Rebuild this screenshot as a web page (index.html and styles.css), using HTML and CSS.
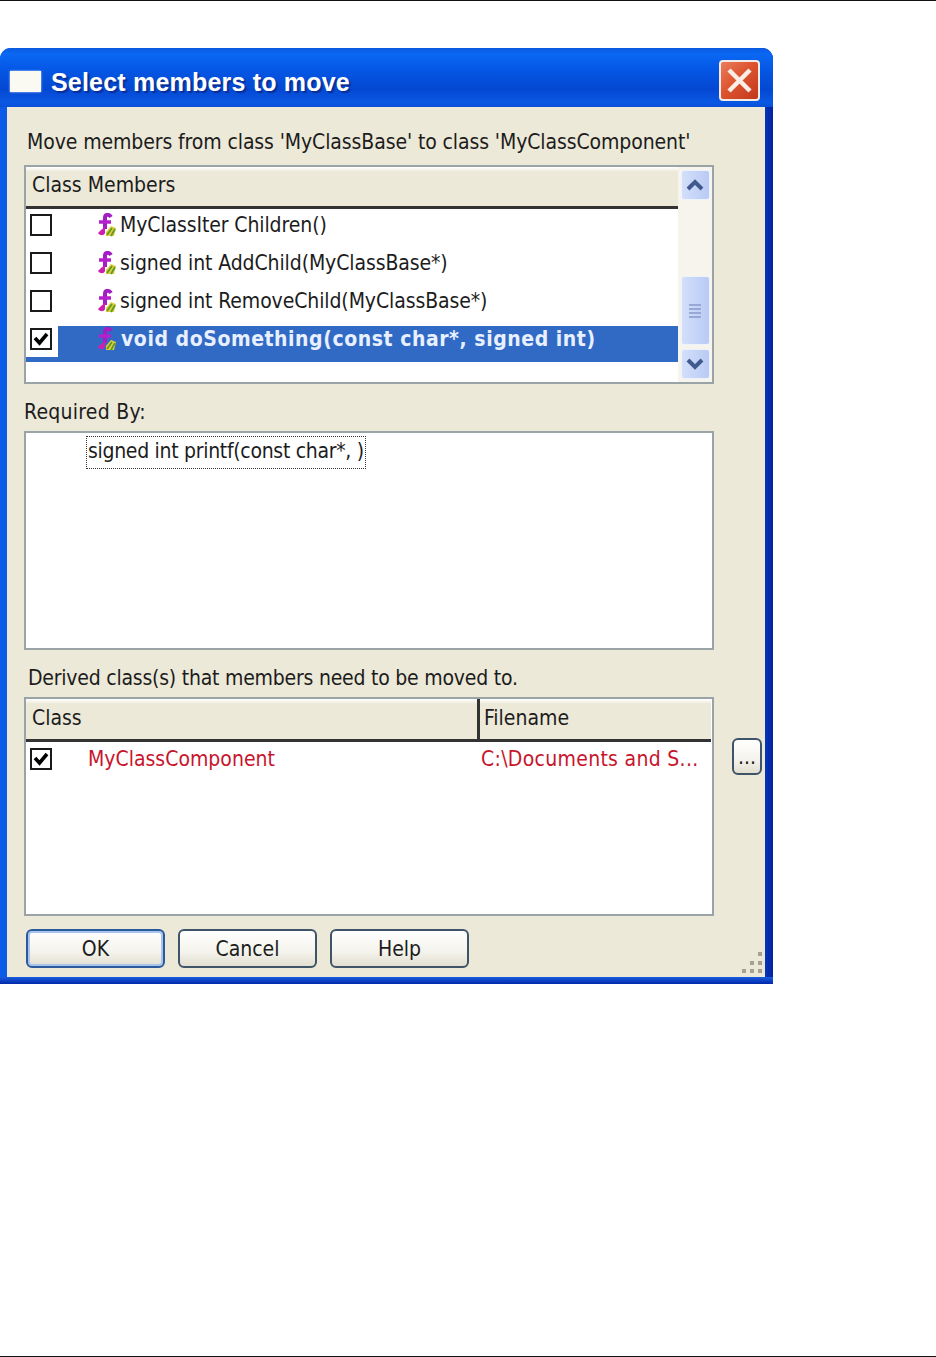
FILE: index.html
```html
<!DOCTYPE html>
<html lang="en">
<head>
  <meta charset="UTF-8" />
  <title>Select members to move</title>
  <link rel="stylesheet" href="styles.css">
</head>
<body>
<div class="page">
  <div class="window">
    <div class="titlebar">
      <span class="title-icon"></span>
      <span class="title-text">Select members to move</span>
      <button class="close-btn" aria-label="Close">
        <svg width="27" height="27" viewBox="0 0 27 27"><path d="M3 3 L24 24 M24 3 L3 24" stroke="#fbeee8" stroke-width="4.5" fill="none"/></svg>
      </button>
    </div>

    <div class="client">
      <div class="label label-move">Move members from class 'MyClassBase' to class 'MyClassComponent'</div>
      <div class="box box-list">
        <div class="list-main">
          <div class="head">Class Members</div>
          <div class="row">
            <span class="cell-check"><span class="check"></span></span>
            <svg class="fn-icon" viewBox="0 0 20 24"><use href="#fn"/></svg>
            <span>MyClassIter Children()</span>
          </div>
          <div class="row">
            <span class="cell-check"><span class="check"></span></span>
            <svg class="fn-icon" viewBox="0 0 20 24"><use href="#fn"/></svg>
            <span>signed int AddChild(MyClassBase*)</span>
          </div>
          <div class="row">
            <span class="cell-check"><span class="check"></span></span>
            <svg class="fn-icon" viewBox="0 0 20 24"><use href="#fn"/></svg>
            <span>signed int RemoveChild(MyClassBase*)</span>
          </div>
          <div class="row row-selected">
            <span class="cell-check"><span class="check"><svg viewBox="0 0 18 18"><use href="#tick"/></svg></span></span>
            <svg class="fn-icon" viewBox="0 0 20 24"><use href="#fn"/></svg>
            <span>void doSomething(const char*, signed int)</span>
          </div>
        </div>
        <div class="scrollbar">
          <span class="sb-btn">
            <svg width="18" height="12" viewBox="0 0 18 12"><path d="M2 10 L9 3 L16 10" stroke="#3f5a8c" stroke-width="4" fill="none"/></svg>
          </span>
          <span class="sb-thumb"><i></i><i></i><i></i><i></i></span>
          <span class="sb-btn">
            <svg width="18" height="12" viewBox="0 0 18 12"><path d="M2 2 L9 9 L16 2" stroke="#3f5a8c" stroke-width="4" fill="none"/></svg>
          </span>
        </div>
      </div>

      <div class="label label-gap label-required">Required By:</div>
      <div class="box box-req">
        <span class="focus-item">signed int printf(const char*, )</span>
      </div>

      <div class="label label-gap label-derived">Derived class(s) that members need to be moved to.</div>
      <div class="derived-row">
        <div class="box box-derived">
          <div class="head head-derived">
            <span class="col-class">Class</span>
            <span class="col-file">Filename</span>
          </div>
          <div class="row row-derived">
            <span class="cell-check"><span class="check"><svg viewBox="0 0 18 18"><use href="#tick"/></svg></span></span>
            <span class="col-name">MyClassComponent</span>
            <span class="col-path">C:\Documents and S...</span>
          </div>
        </div>
        <button class="btn btn-more">...</button>
      </div>

      <div class="buttons">
        <button class="btn btn-main btn-default">OK</button>
        <button class="btn btn-main">Cancel</button>
        <button class="btn btn-main">Help</button>
      </div>

      <svg class="grip" width="20" height="24" viewBox="0 0 20 24">
        <g fill="#a5a294">
          <rect x="16" y="2" width="4" height="4"/>
          <rect x="8" y="11" width="4" height="4"/>
          <rect x="16" y="11" width="4" height="4"/>
          <rect x="0" y="19" width="4" height="4"/>
          <rect x="8" y="19" width="4" height="4"/>
          <rect x="16" y="19" width="4" height="4"/>
        </g>
      </svg>
    </div>
  </div>
</div>

<!-- shared icons -->
<svg class="defs" width="0" height="0">
  <defs>
    <g id="fn">
      <path d="M15 4 C13 1 9 1 9 5 L9 16" stroke="#a31cc4" stroke-width="4" fill="none"/>
      <path d="M3 9 H15" stroke="#b620cc" stroke-width="3.5"/>
      <path d="M9 14 L9 20 C8 23 4 23 2 20 L5 17 Z" fill="#cf1fb0"/>
      <path d="M10 19 L15 13 L20 15 L18 23 L10 23 Z" fill="#e0cf3c"/>
      <path d="M11 22 L16 15 M15 23 L19 16" stroke="#5f9a24" stroke-width="1.8"/>
    </g>
    <path id="tick" d="M3 8 L7.5 13 L15 4" stroke="#000" stroke-width="3.6" fill="none"/>
  </defs>
</svg>
</body>
</html>
```

FILE: styles.css
```css
* {
  box-sizing: border-box;
}
body {
  margin: 0;
  background: #fff;
  font-family: "DejaVu Sans", "Liberation Sans", Arial, sans-serif;
  font-stretch: condensed;
  font-size: 21px;
  color: #1c1c1c;
}
button {
  font: inherit;
  font-stretch: condensed;
  color: inherit;
  padding: 0;
}

.page {
  height: 1357px;
  border-top: 1px solid #111;
  border-bottom: 1px solid #111;
  padding-top: 47px;
}

.window {
  position: relative;
  width: 773px;
  height: 936px;
  border-radius: 11px 11px 0 0;
  background:
    linear-gradient(180deg, #1a5ce0 0, #0028a8 100%) bottom / 100% 7px no-repeat,
    linear-gradient(90deg, #0a5ce6 0, #0a5ce6 740px, #0436b8 765px, #0222a2 773px);
  padding-bottom: 7px;
}

/* title bar */
.titlebar {
  height: 59px;
  padding: 8px 13px 0 10px;
  display: flex;
  align-items: center;
  border-radius: 11px 11px 0 0;
  background: linear-gradient(180deg, #0a5ae0 0, #0a68f2 10%, #0558e6 35%, #0448d2 70%, #0a58e4 92%, #0a4fd6 100%);
}
.title-icon {
  width: 31px;
  height: 21px;
  background: #fbfaf2;
  box-shadow: 0 0 2px #cfe0ff;
  margin-right: 10px;
}
.title-text {
  flex: 1;
  padding-top: 2px;
  color: #fff;
  font-family: "Liberation Sans", Arial, sans-serif;
  font-stretch: normal;
  font-size: 25px;
  font-weight: 700;
  letter-spacing: 0.2px;
  text-shadow: 2px 2px 1px #0a2f96;
}
.close-btn {
  width: 41px;
  height: 41px;
  margin-top: -3px;
  border: 2px solid #f3ece6;
  border-radius: 4px;
  background: linear-gradient(135deg, #ea7d5c 0, #dd5430 45%, #c0391a 100%);
  display: flex;
  align-items: center;
  justify-content: center;
}

/* client area */
.client {
  position: relative;
  height: 870px;
  margin: 0 8px 0 7px;
  padding: 21px 0 0 17px;
  background: #ece9d8;
}
.label {
  height: 28px;
  line-height: 28px;
  margin-left: 3px;
  margin-bottom: 9px;
  white-space: nowrap;
}
.label-gap {
  margin: 14px 0 5px 0;
}
.label-move {
  letter-spacing: -0.1px;
}
.label-required {
  letter-spacing: 0.25px;
}
.label-derived {
  margin-left: 4px;
  letter-spacing: -0.22px;
}

.box {
  width: 690px;
  height: 219px;
  border: 2px solid #9aa3a6;
  background: #fff;
}
.box-list {
  display: flex;
}
.list-main {
  width: 652px;
}
.box-req {
  padding: 3px 0 0 60px;
}
.focus-item {
  display: inline-block;
  height: 33px;
  line-height: 29px;
  padding: 0 1px;
  border: 1px dotted #333;
  letter-spacing: -0.3px;
  white-space: nowrap;
}

.head {
  height: 42px;
  line-height: 37px;
  padding-left: 6px;
  background: linear-gradient(180deg, #fff 0, #ece9d8 5px);
  border-bottom: 3px solid #333;
}
.head-derived {
  display: flex;
  width: 685px;
  height: 43px;
  line-height: 38px;
}
.col-class {
  width: 448px;
  border-right: 3px solid #333;
}
.col-file {
  padding-left: 4px;
}

.row {
  display: flex;
  align-items: center;
  height: 38px;
  padding-bottom: 6px;
  letter-spacing: -0.1px;
  white-space: nowrap;
}
.row-selected {
  height: 39px;
  padding-bottom: 7px;
  background: linear-gradient(180deg, #fff 3px, #316ac5 3px);
  color: #e8f0ff;
  font-weight: 700;
  letter-spacing: 0.55px;
}
.cell-check {
  width: 32px;
  align-self: stretch;
  display: flex;
  align-items: center;
  padding-left: 4px;
  margin-right: 38px;
}
.row-selected .cell-check {
  background: #fff;
  margin-bottom: -2px;
  padding-bottom: 2px;
}
.check {
  width: 22px;
  height: 22px;
  border: 2.5px solid #1a1a1a;
  background: #fff;
  display: block;
}
.check svg {
  display: block;
  width: 100%;
  height: 100%;
}
.fn-icon {
  width: 20px;
  height: 24px;
  margin-right: 4px;
}
.row-selected .fn-icon {
  margin-right: 5px;
}
.defs {
  position: absolute;
}

/* scrollbar */
.scrollbar {
  width: 34px;
  padding: 3px 2px 3px 2px;
  display: flex;
  flex-direction: column;
  align-items: center;
  background: #f6f4ec;
}
.sb-btn,
.sb-thumb {
  width: 29px;
  border: 1px solid #eef2fd;
  border-radius: 3px;
  background: linear-gradient(90deg, #d3dffa, #b9caf4);
  display: flex;
  flex-direction: column;
  align-items: center;
  justify-content: center;
}
.sb-btn {
  height: 30px;
}
.sb-thumb {
  height: 70px;
  margin-top: 76px;
  margin-bottom: 4px;
  gap: 2px;
}
.sb-thumb i {
  width: 12px;
  height: 2px;
  background: #96a9d6;
}

/* lower table */
.derived-row {
  display: flex;
}
.btn-more {
  width: 30px;
  height: 37px;
  margin: 41px 0 0 18px;
  line-height: 30px;
}
.row-derived {
  height: 38px;
  padding: 0;
  margin-top: -2px;
  color: #c8142c;
  letter-spacing: 0;
}
.row-derived .cell-check {
  margin-right: 30px;
}
.col-name {
  width: 393px;
}
.col-path {
  letter-spacing: 0.3px;
}

/* buttons */
.btn {
  border: 2px solid #3e5468;
  border-radius: 6px;
  background: linear-gradient(180deg, #fff 0, #f4f3ec 60%, #e2dfd0 100%);
}
.buttons {
  display: flex;
  gap: 13px;
  margin: 13px 0 0 2px;
}
.btn-main {
  width: 139px;
  height: 39px;
}
.btn-default {
  border-color: #2a5a9c;
  box-shadow: inset 0 0 0 2px #a9c4ec;
}

.grip {
  position: absolute;
  right: 3px;
  bottom: 3px;
}
```
